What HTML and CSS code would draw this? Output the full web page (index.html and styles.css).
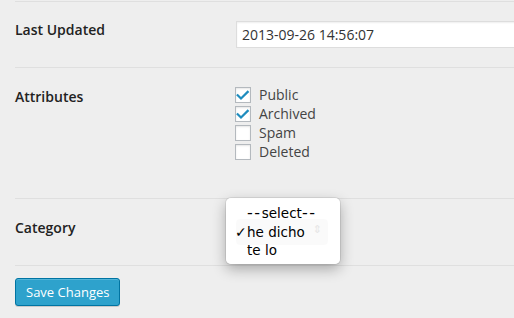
FILE: index.html
```html
<!DOCTYPE html>
<html>
<head>
<meta charset="utf-8">
<link rel="stylesheet" href="styles.css">
</head>
<body>
<div class="form">
  <div class="row row-updated">
    <div class="th">Last Updated</div>
    <div class="td"><input class="text" type="text" value="2013-09-26 14:56:07"></div>
  </div>
  <div class="row row-attrs">
    <div class="th">Attributes</div>
    <div class="td">
      <div class="check"><span class="box"><svg viewBox="0 0 16 16" width="16" height="16"><path d="M2.7 8.2 L6 11.5 L12.7 4.9" fill="none" stroke="#1e8cbe" stroke-width="2.2" stroke-linecap="square"/></svg></span><span class="lbl">Public</span></div>
      <div class="check"><span class="box"><svg viewBox="0 0 16 16" width="16" height="16"><path d="M2.7 8.2 L6 11.5 L12.7 4.9" fill="none" stroke="#1e8cbe" stroke-width="2.2" stroke-linecap="square"/></svg></span><span class="lbl">Archived</span></div>
      <div class="check"><span class="box"></span><span class="lbl">Spam</span></div>
      <div class="check"><span class="box"></span><span class="lbl">Deleted</span></div>
    </div>
  </div>
  <div class="row row-cat">
    <div class="th">Category</div>
    <div class="td"></div>
    <div class="popup">
      <div class="ghost-select"><span class="ghost-arrow">⇕</span></div>
      <div class="opt"><span class="dash">--</span>select<span class="dash">--</span></div>
      <div class="opt selected"><span class="tick">✓</span>he dicho</div>
      <div class="opt">te lo</div>
    </div>
  </div>
</div>
<div class="submit"><button class="button-primary">Save Changes</button></div>
</body>
</html>
```
FILE: styles.css
```css
html, body {
  margin: 0;
  padding: 0;
  background: #eeeeee;
  width: 514px;
  height: 318px;
  overflow: hidden;
}
body {
  font-family: "Open Sans", "Liberation Sans", sans-serif;
  color: #333;
}
.form {
  margin: 1px 0 0 15px;
  border-top: 1px solid #dfdfdf;
}
.row {
  display: grid;
  grid-template-columns: 220px 1fr;
  border-bottom: 1px solid #dfdfdf;
  box-sizing: border-box;
  position: relative;
}
.th {
  font-size: 14px;
  font-weight: 600;
  line-height: 19px;
  color: #222;
}
.td { min-width: 0; }
.row-updated { height: 66px; }
.row-updated .th { padding-top: 18px; }
.row-updated .td { padding-top: 19px; overflow: hidden; }
.row-attrs { height: 131px; }
.row-attrs .th { padding-top: 19px; }
.row-attrs .td { padding-top: 19px; }
.row-cat { height: 67px; }
.row-cat .th { padding-top: 19px; }

.text {
  display: block;
  margin: 0 0 0 1px;
  width: 320px;
  height: 27px;
  box-sizing: border-box;
  border: 1px solid #dddddd;
  background: #fff;
  box-shadow: inset 0 1px 2px rgba(0,0,0,.07);
  padding: 0 5px;
  font-family: "Open Sans", "Liberation Sans", sans-serif;
  font-size: 14px;
  color: #333;
  outline: none;
}
.check {
  display: flex;
  align-items: flex-start;
  height: 19px;
}
.box {
  width: 16px;
  height: 16px;
  box-sizing: border-box;
  border: 1px solid #b4b9be;
  background: #fff;
  box-shadow: inset 0 1px 2px rgba(0,0,0,.1);
  position: relative;
  flex: none;
}
.box svg {
  position: absolute;
  left: -1px;
  top: -1px;
}
.lbl {
  margin-left: 8px;
  font-size: 14px;
  line-height: 16px;
  color: #444;
}
.popup {
  position: absolute;
  left: 211px;
  top: -1px;
  width: 114px;
  height: 66px;
  box-sizing: border-box;
  background: rgba(255,255,255,0.97);
  border-radius: 5px;
  box-shadow: 0 0 0 1px rgba(0,0,0,.08), 0 5px 14px rgba(0,0,0,.3);
  padding: 6px 0 0 21px;
  font-family: "DejaVu Sans", "Liberation Sans", sans-serif;
  font-size: 13.5px;
  color: #000;
  z-index: 2;
}
.ghost-select {
  position: absolute;
  left: 10px;
  top: 21px;
  width: 92px;
  height: 26px;
  border-radius: 4px;
  background: rgba(0,0,0,0.02);
}
.ghost-arrow {
  position: absolute;
  right: 6px;
  top: 4px;
  font-size: 11px;
  color: #e6e6e6;
}
.opt {
  position: relative;
  line-height: 18.5px;
  white-space: nowrap;
}
.dash {
  font-size: 16px;
  letter-spacing: 1.6px;
}
.tick {
  position: absolute;
  left: -12px;
  top: 0;
  font-size: 14px;
  font-weight: bold;
}
.submit {
  padding: 12px 0 0 15px;
}
.button-primary {
  display: block;
  height: 28px;
  box-sizing: border-box;
  padding: 0 10px 1px;
  background: #2ea2cc;
  border: 1px solid #0074a2;
  border-radius: 3px;
  box-shadow: inset 0 1px 0 rgba(120,200,230,.5), 0 1px 0 rgba(0,0,0,.15);
  color: #fff;
  font-family: "Open Sans", "Liberation Sans", sans-serif;
  font-size: 13px;
  line-height: 26px;
  cursor: pointer;
}
```
